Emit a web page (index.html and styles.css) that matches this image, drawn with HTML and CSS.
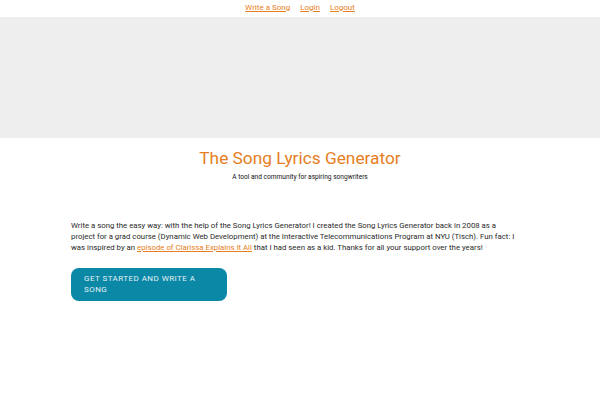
FILE: index.html
```html
<!DOCTYPE html>
<html lang="en">
<head>
<meta charset="utf-8">
<title>The Song Lyrics Generator</title>
<link rel="stylesheet" href="styles.css">
</head>
<body>
<nav class="nav">
  <a href="#">Write a Song</a>
  <a href="#">Login</a>
  <a href="#">Logout</a>
</nav>
<div class="banner"></div>
<header class="hero">
  <h1 class="title">The Song Lyrics Generator</h1>
  <p class="tagline">A tool and community for aspiring songwriters</p>
</header>
<main class="content">
  <p class="intro">Write a song the easy way: with the help of the Song Lyrics Generator! I created the Song Lyrics Generator back in 2008 as a project for a grad course (Dynamic Web Development) at the Interactive Telecommunications Program at NYU (Tisch). Fun fact: I was inspired by an <a href="#">episode of Clarissa Explains It All</a> that I had seen as a kid. Thanks for all your support over the years!</p>
  <a class="cta" href="#">Get started and write a song</a>
</main>
</body>
</html>
```
FILE: styles.css
```css
html, body {
  margin: 0;
  padding: 0;
  background: #fff;
  font-family: Roboto, "Liberation Sans", sans-serif;
  color: #222;
}
.nav {
  display: flex;
  justify-content: center;
  gap: 10px;
  padding-top: 3px;
  height: 14px;
  box-sizing: content-box;
  font-size: 8px;
  line-height: 10px;
}
.nav a {
  color: #e67e22;
  text-decoration: underline;
}
.banner {
  height: 121px;
  background: #eeeeee;
}
.hero {
  text-align: center;
  padding-top: 10px;
}
.title {
  margin: 0;
  font-size: 17.3px;
  font-weight: 400;
  line-height: 21px;
  color: #e67e22;
}
.tagline {
  margin: 3px 0 0;
  font-size: 6.6px;
  line-height: 10px;
  color: #111;
}
.content {
  padding: 38px 71px 0;
}
.intro {
  margin: 0;
  max-width: 444px;
  font-size: 7.8px;
  line-height: 11px;
  color: #2a2a2a;
}
.intro a {
  color: #e67e22;
  text-decoration: underline;
}
.cta {
  display: block;
  width: 156px;
  box-sizing: border-box;
  margin-top: 15px;
  padding: 5px 13px 6px;
  background: #0a88a6;
  color: #e3f1f5;
  border-radius: 8px;
  font-size: 8px;
  line-height: 11px;
  letter-spacing: 0.45px;
  text-transform: uppercase;
  text-decoration: none;
  font-weight: 400;
}
```
